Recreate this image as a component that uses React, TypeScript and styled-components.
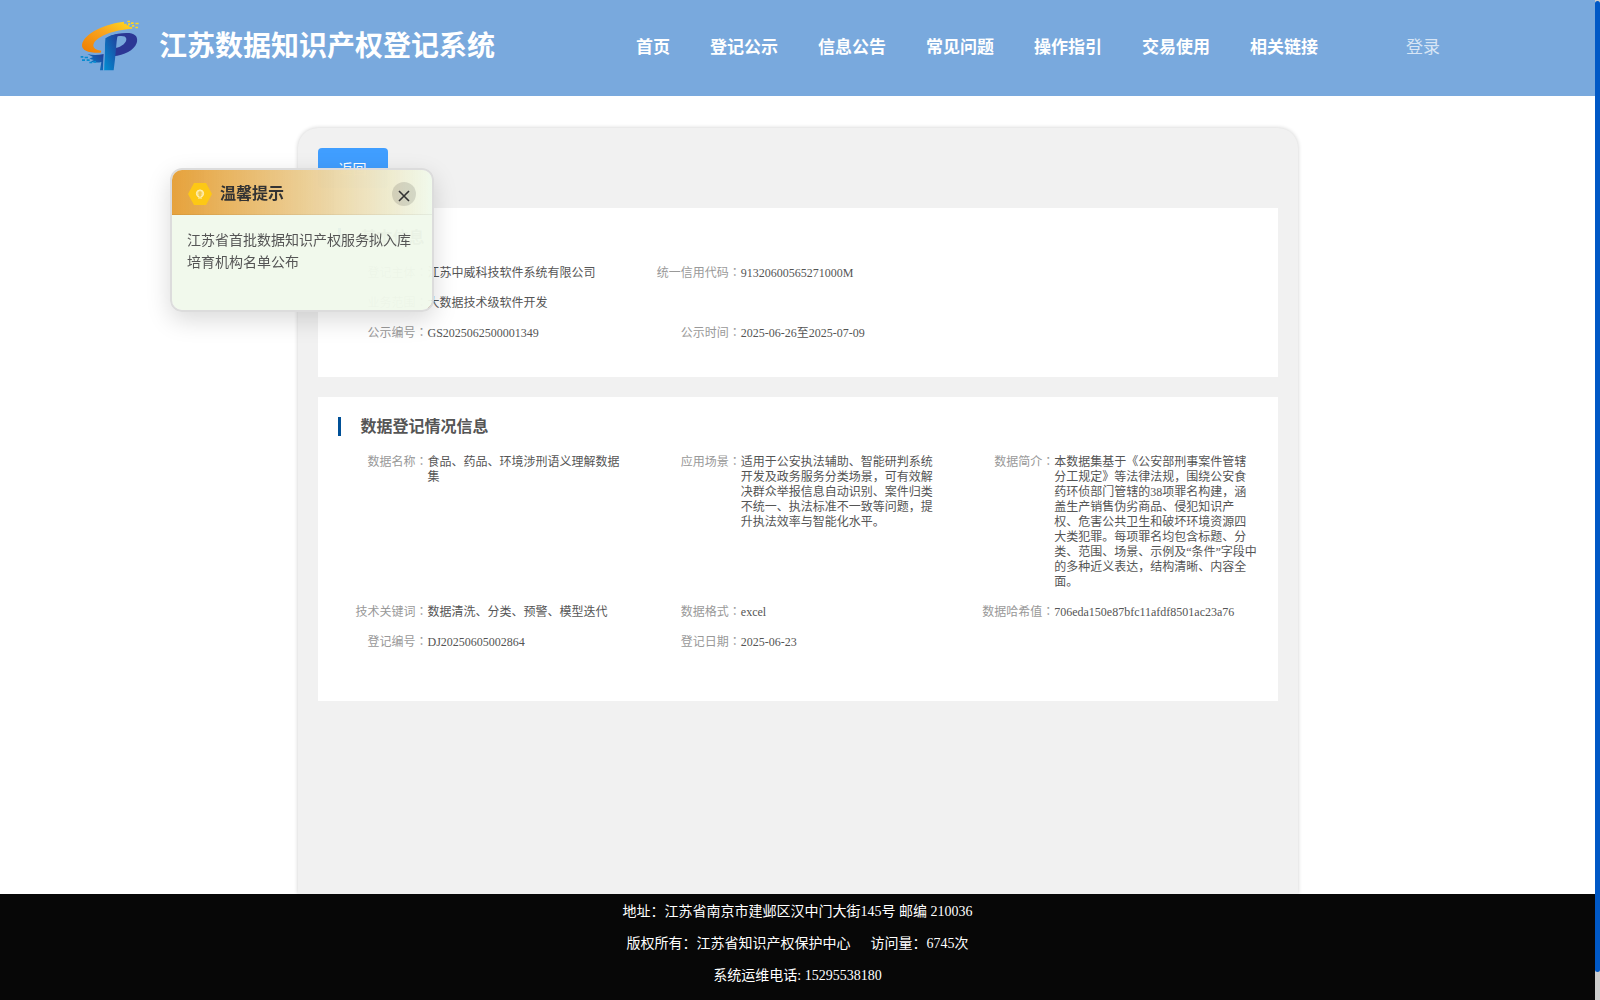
import React, { useState } from "react";
import styled, { createGlobalStyle } from "styled-components";

const GlobalStyle = createGlobalStyle`
  * { box-sizing: border-box; }
  body {
    margin: 0;
    background: #fff;
    color: #555;
    font-family: "Liberation Serif", "Noto Sans CJK SC", serif;
    text-spacing-trim: space-all;
  }
`;

const Shell = styled.div`
  display: grid;
  grid-template-columns: minmax(0, 1fr) 5px;
  min-height: 100vh;
`;

const Page = styled.div`
  display: flex;
  flex-direction: column;
`;

const ScrollTrack = styled.div`
  background: #ccc;
  padding: 1px 0 28px;
  display: flex;
`;

const ScrollThumb = styled.div`
  flex: 1;
  border-radius: 3px;
  background: #0058c6;
`;

const Header = styled.header`
  display: flex;
  align-items: center;
  height: 96px;
  padding: 0 155px 0 80px;
  background: #79a9dd;
  color: #fff;
`;

const Brand = styled.div`
  display: flex;
  align-items: center;
  gap: 19px;
  flex: 1;
  padding-bottom: 5px;
`;

const BrandName = styled.h1`
  margin: 0;
  padding-top: 2px;
  font-size: 28px;
  line-height: 40px;
  font-weight: 700;
  white-space: nowrap;
`;

const Nav = styled.nav`
  display: flex;
  gap: 40px;
`;

const NavLink = styled.a<{ $plain?: boolean }>`
  color: ${(p) => (p.$plain ? "#d7e5f5" : "#fff")};
  font-size: 17px;
  line-height: 24px;
  font-weight: ${(p) => (p.$plain ? 400 : 700)};
  text-decoration: none;
  white-space: nowrap;
`;

const Login = styled.div`
  margin-left: 88px;
`;

const Main = styled.main`
  flex: 1;
  display: flex;
  justify-content: center;
  padding-top: 32px;
`;

const Panel = styled.div`
  width: 1000px;
  padding: 20px;
  border-radius: 20px 20px 0 0;
  background: #f1f1f1;
  box-shadow: 0 0 4px rgba(0, 0, 0, 0.2);
`;

const BackButton = styled.button`
  display: block;
  width: 70px;
  height: 40px;
  padding: 0;
  border: 0;
  border-radius: 4px;
  background: #409eff;
  color: #fff;
  font: inherit;
  font-size: 14px;
`;

const Section = styled.section<{ $bottom: number }>`
  margin-top: 20px;
  padding: 20px 0 ${(p) => p.$bottom}px 20px;
  background: #fff;
`;

const SectionTitle = styled.h2`
  margin: 0 0 19px;
  padding-left: 20px;
  border-left: 3px solid #005097;
  font-size: 16px;
  line-height: 19px;
  font-weight: 700;
`;

const Fields = styled.dl`
  display: grid;
  grid-template-columns: repeat(3, 1fr);
  row-gap: 15px;
  margin: 0;
`;

const Field = styled.div<{ $wide?: boolean }>`
  grid-column: ${(p) => (p.$wide ? "1 / -1" : "auto")};
  display: flex;
  padding-right: 20px;
  font-size: 12px;
  line-height: 15px;
`;

const Label = styled.dt`
  flex: 0 0 90px;
  text-align: right;
  color: #999;
`;

const Colon = styled.span`
  font-family: "Liberation Serif", "Noto Sans CJK TC", sans-serif;
  line-height: 0;
`;

const Value = styled.dd`
  margin: 0;
  flex: 1;
  min-width: 0;
`;

const Footer = styled.footer`
  padding: 2px 0 8px;
  background: #070707;
  color: #fff;
  font-size: 14px;
  line-height: 32px;
  text-align: center;
`;

const FooterLine = styled.div`
  display: flex;
  justify-content: center;
  gap: 20px;
`;

const Notice = styled.aside`
  position: fixed;
  left: 170px;
  top: 168px;
  width: 264px;
  height: 144px;
  border: 2px solid #dcdcdc;
  border-radius: 12px;
  background: rgba(240, 249, 235, 0.96);
  background-clip: padding-box;
  box-shadow: 0 8px 24px rgba(0, 0, 0, 0.15);
  overflow: hidden;
`;

const NoticeHead = styled.div`
  display: flex;
  align-items: center;
  gap: 8px;
  height: 45px;
  padding: 4px 16px 0;
  border-bottom: 1px solid rgba(0, 0, 0, 0.05);
  background: linear-gradient(90deg, #e6a23c, rgba(240, 249, 235, 0.6));
`;

const NoticeTitle = styled.h3`
  flex: 1;
  margin: 0;
  font-size: 16px;
  line-height: 24px;
  color: #333;
`;

const CloseButton = styled.button`
  display: grid;
  place-items: center;
  width: 24px;
  height: 24px;
  padding: 3px 0 0;
  border: 0;
  border-radius: 50%;
  background: rgba(0, 0, 0, 0.12);
  color: #333;
`;

const NoticeText = styled.p`
  margin: 0;
  padding: 15px 15px 0;
  font-size: 14px;
  line-height: 22px;
`;

const Logo = () => (
  <svg width="60" height="51" viewBox="60 58 180 153" aria-hidden="true">
    <defs>
      <linearGradient id="swoosh" x1="0" y1="1" x2="1" y2="0">
        <stop offset="0" stopColor="#ee7c00" />
        <stop offset="0.55" stopColor="#f9a51f" />
        <stop offset="1" stopColor="#ffdb1e" />
      </linearGradient>
      <linearGradient id="stem" x1="1" y1="0" x2="0" y2="1">
        <stop offset="0" stopColor="#243c98" />
        <stop offset="1" stopColor="#0090d4" />
      </linearGradient>
    </defs>
    <path fill="url(#swoosh)" d="M192 63C140 69 72 96 66 132C65 149 84 157 122 156L124 150C104 148 96 139 102 127C114 106 160 88 217 84L216 79L208 79L208 74L200 74L200 69L192 69Z" />
    <path fill="#ffd522" d="M202 60h8v5h-8zM213 65h8v5h-8zM204 68h7v5h-7zM226 66h10v5h-10zM216 73h7v5h-7zM226 78h8v5h-8z" />
    <path fill="#2c3795" d="M150 106C168 98 188 96 208 97C228 99 235 112 230 127C222 149 193 164 160 167L166 142C186 138 200 126 199 114C197 106 188 105 172 107L160 140Z" />
    <path fill="url(#stem)" d="M136 113C146 106 158 101 174 100C169 117 169 143 165 176L161 209H131Z" />
    <path fill="url(#stem)" d="M82 160C97 164 112 164 132 160L129 209H120L124 184C112 187 104 185 92 183L101 178L88 174L99 169Z" />
    <path fill="#078bd0" d="M62 166h8v5h-8zM74 168h10v5h-10zM66 176h9v5h-9zM80 176h9v5h-9zM88 183h9v5h-9zM100 181h8v5h-8z" />
    <path fill="none" stroke="#79a9dd" strokeWidth="3" d="M131 209L134 111Q146 101 172 97" />
  </svg>
);

const Hexagon = () => (
  <svg width="24" height="22" viewBox="0 0 24 22" aria-hidden="true">
    <path fill="#fdc815" d="M6 0H18L24 11L18 22H6L0 11Z" />
    <circle cx="12" cy="10.500" r="3.600" fill="#fde48c" stroke="#fff2c0" />
    <path fill="none" stroke="#e9b92d" strokeWidth=".8" d="M10 10h4M10.500 12h3M12 8v6" />
    <path stroke="#fff2c0" d="M10 15h4" />
  </svg>
);

const navItems = ["首页", "登记公示", "信息公告", "常见问题", "操作指引", "交易使用", "相关链接"];

type Entry = { label: string; value: string; wide?: boolean };

const basicInfo: Entry[] = [
  { label: "登记主体", value: "江苏中威科技软件系统有限公司" },
  { label: "统一信用代码", value: "91320600565271000M" },
  { label: "业务范围", value: "大数据技术级软件开发", wide: true },
  { label: "公示编号", value: "GS2025062500001349" },
  { label: "公示时间", value: "2025-06-26至2025-07-09" },
];

const dataInfo: Entry[] = [
  { label: "数据名称", value: "食品、药品、环境涉刑语义理解数据集" },
  {
    label: "应用场景",
    value:
      "适用于公安执法辅助、智能研判系统开发及政务服务分类场景，可有效解决群众举报信息自动识别、案件归类不统一、执法标准不一致等问题，提升执法效率与智能化水平。",
  },
  {
    label: "数据简介",
    value:
      "本数据集基于《公安部刑事案件管辖分工规定》等法律法规，围绕公安食药环侦部门管辖的38项罪名构建，涵盖生产销售伪劣商品、侵犯知识产权、危害公共卫生和破坏环境资源四大类犯罪。每项罪名均包含标题、分类、范围、场景、示例及“条件”字段中的多种近义表达，结构清晰、内容全面。",
  },
  { label: "技术关键词", value: "数据清洗、分类、预警、模型迭代" },
  { label: "数据格式", value: "excel" },
  { label: "数据哈希值", value: "706eda150e87bfc11afdf8501ac23a76" },
  { label: "登记编号", value: "DJ20250605002864" },
  { label: "登记日期", value: "2025-06-23" },
];

const FieldList = ({ entries }: { entries: Entry[] }) => (
  <Fields>
    {entries.map((e) => (
      <Field key={e.label} $wide={e.wide}>
        <Label>
          {e.label}
          <Colon>：</Colon>
        </Label>
        <Value>{e.value}</Value>
      </Field>
    ))}
  </Fields>
);

export default function App() {
  const [open, setOpen] = useState(true);
  return (
    <>
      <GlobalStyle />
      <Shell>
        <Page>
          <Header>
            <Brand>
              <Logo />
              <BrandName>江苏数据知识产权登记系统</BrandName>
            </Brand>
            <Nav>
              {navItems.map((n) => (
                <NavLink key={n} href="#">
                  {n}
                </NavLink>
              ))}
            </Nav>
            <Login>
              <NavLink $plain href="#">
                登录
              </NavLink>
            </Login>
          </Header>
          <Main>
            <Panel>
              <BackButton type="button">返回</BackButton>
              <Section $bottom={36}>
                <SectionTitle>基本信息</SectionTitle>
                <FieldList entries={basicInfo} />
              </Section>
              <Section $bottom={51}>
                <SectionTitle>数据登记情况信息</SectionTitle>
                <FieldList entries={dataInfo} />
              </Section>
            </Panel>
          </Main>
          <Footer>
            <FooterLine>地址：江苏省南京市建邺区汉中门大街145号 邮编 210036</FooterLine>
            <FooterLine>
              <span>版权所有：江苏省知识产权保护中心</span>
              <span>访问量：6745次</span>
            </FooterLine>
            <FooterLine>系统运维电话: 15295538180</FooterLine>
          </Footer>
        </Page>
        <ScrollTrack>
          <ScrollThumb />
        </ScrollTrack>
      </Shell>
      {open && (
        <Notice>
          <NoticeHead>
            <Hexagon />
            <NoticeTitle>温馨提示</NoticeTitle>
            <CloseButton type="button" aria-label="关闭" onClick={() => setOpen(false)}>
              <svg width="12" height="12" viewBox="0 0 12 12" aria-hidden="true">
                <path d="M1 1L11 11M11 1L1 11" stroke="currentColor" strokeWidth="1.6" />
              </svg>
            </CloseButton>
          </NoticeHead>
          <NoticeText>江苏省首批数据知识产权服务拟入库培育机构名单公布</NoticeText>
        </Notice>
      )}
    </>
  );
}
